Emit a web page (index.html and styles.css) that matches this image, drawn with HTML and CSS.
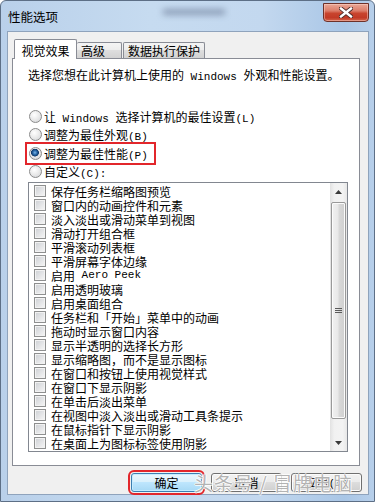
FILE: index.html
```html
<!DOCTYPE html>
<html lang="zh-CN">
<head>
<meta charset="utf-8">
<title>性能选项</title>
<link rel="stylesheet" href="styles.css">
</head>
<body>
<div class="window">
  <div class="titlebar">
    <span class="title">性能选项</span>
    <span class="glass-blur"></span>
    <button class="close" aria-label="关闭">
      <svg width="14" height="11" viewBox="0 0 14 11"><path d="M2 1.5 L12 9.5 M12 1.5 L2 9.5" stroke="#4a2a28" stroke-width="4.2" stroke-linecap="square"/><path d="M2 1.5 L12 9.5 M12 1.5 L2 9.5" stroke="#ffffff" stroke-width="2.4" stroke-linecap="square"/></svg>
    </button>
  </div>
  <div class="client">
    <div class="tabs">
      <div class="tab active">视觉效果</div>
      <div class="tab t2">高级</div>
      <div class="tab t3">数据执行保护</div>
    </div>
    <div class="panel">
      <p class="intro">选择您想在此计算机上使用的<span class="lat"> Windows </span>外观和性能设置。</p>
      <div class="radios">
        <div class="radio-row"><span class="radio"></span><span>让<span class="lat"> Windows </span>选择计算机的最佳设置<span class="lat">(L)</span></span></div>
        <div class="radio-row"><span class="radio"></span><span>调整为最佳外观<span class="lat">(B)</span></span></div>
        <div class="radio-row marked"><span class="radio on"></span><span>调整为最佳性能<span class="lat">(P)</span></span></div>
        <div class="radio-row"><span class="radio"></span><span>自定义<span class="lat">(C):</span></span></div>
      </div>
      <div class="listbox">
        <ul class="items">
          <li><span class="check"></span>保存任务栏缩略图预览</li>
          <li><span class="check"></span>窗口内的动画控件和元素</li>
          <li><span class="check"></span>淡入淡出或滑动菜单到视图</li>
          <li><span class="check"></span>滑动打开组合框</li>
          <li><span class="check"></span>平滑滚动列表框</li>
          <li><span class="check"></span>平滑屏幕字体边缘</li>
          <li><span class="check"></span>启用<span class="lat"> Aero Peek</span></li>
          <li><span class="check"></span>启用透明玻璃</li>
          <li><span class="check"></span>启用桌面组合</li>
          <li><span class="check"></span>任务栏和「开始」菜单中的动画</li>
          <li><span class="check"></span>拖动时显示窗口内容</li>
          <li><span class="check"></span>显示半透明的选择长方形</li>
          <li><span class="check"></span>显示缩略图，而不是显示图标</li>
          <li><span class="check"></span>在窗口和按钮上使用视觉样式</li>
          <li><span class="check"></span>在窗口下显示阴影</li>
          <li><span class="check"></span>在单击后淡出菜单</li>
          <li><span class="check"></span>在视图中淡入淡出或滑动工具条提示</li>
          <li><span class="check"></span>在鼠标指针下显示阴影</li>
          <li><span class="check"></span>在桌面上为图标标签使用阴影</li>
        </ul>
        <div class="scrollbar">
          <div class="sb-btn"><svg width="7" height="4" viewBox="0 0 7 4"><path d="M0 4 L3.5 0 L7 4 Z" fill="#3a3a3a"/></svg></div>
          <div class="track">
            <div class="thumb"><svg width="7" height="7" viewBox="0 0 7 7"><path d="M0 1.5 H7 M0 3.5 H7 M0 5.5 H7" stroke="#5a5a5a" stroke-width="1"/></svg></div>
          </div>
          <div class="sb-btn"><svg width="7" height="4" viewBox="0 0 7 4"><path d="M0 0 L3.5 4 L7 0 Z" fill="#3a3a3a"/></svg></div>
        </div>
      </div>
    </div>
    <div class="buttons">
      <button class="btn default">确定</button>
      <button class="btn">取消</button>
      <button class="btn">应用<span class="lat">(A)</span></button>
    </div>
  </div>
  <div class="watermark">头条号 / 冒牌电脑</div>
</div>
</body>
</html>
```
FILE: styles.css
```css
* { box-sizing: border-box; margin: 0; padding: 0; }
html, body { width: 375px; height: 502px; overflow: hidden; }
body {
  font-family: "Noto Sans CJK SC", "Noto Sans", sans-serif;
  font-size: 12px;
  color: #000;
  background: #fff;
}
.lat { font-family: "Liberation Mono", "DejaVu Sans Mono", monospace; font-size: 11px; white-space: pre; }

.window {
  position: relative;
  width: 375px;
  height: 502px;
  border: 1px solid #5d6f86;
  border-radius: 6px 6px 0 0;
  background: linear-gradient(90deg, #b9d0ea 0%, #c6dbf0 40%, #c3d8ef 70%, #a9c6e6 92%, #b7cfea 100%);
  display: flex;
  flex-direction: column;
}
.titlebar {
  position: relative;
  height: 30px;
  display: flex;
  align-items: flex-start;
  flex-shrink: 0;
}
.title { margin: 8px 0 0 7px; font-size: 12.5px; line-height: 16px; }
.glass-blur {
  position: absolute;
  left: 162px;
  top: 8px;
  width: 62px;
  height: 6px;
  background: rgba(70, 85, 115, 0.45);
  filter: blur(3px);
}
.close {
  margin: 2px 5px 0 auto;
  width: 46px;
  height: 19px;
  border: 1px solid #6e3129;
  border-radius: 0 0 4px 4px;
  background: linear-gradient(180deg, #e9a796 0%, #dc7d69 40%, #c8442e 55%, #c23a26 80%, #d2654c 100%);
  box-shadow: inset 0 0 0 1px rgba(255, 220, 210, 0.45);
  display: flex;
  align-items: center;
  justify-content: center;
}

.client {
  margin: 0 5px 0 6px;
  height: 464px;
  border: 1px solid #8fa3bc;
  background: #f0f0f0;
  padding-top: 7px;
  display: flex;
  flex-direction: column;
  flex-shrink: 0;
}

.tabs {
  position: relative;
  z-index: 1;
  display: flex;
  align-items: flex-end;
  height: 20px;
  margin-left: 6px;
  margin-bottom: -1px;
}
.tab {
  height: 16px;
  margin-bottom: 1px;
  border: 1px solid #898c95;
  border-bottom: none;
  border-radius: 2px 2px 0 0;
  background: linear-gradient(180deg, #f4f4f4 0%, #ececec 50%, #dedede 50%, #d2d2d2 100%);
  padding-left: 4px;
  line-height: 15px;
  white-space: nowrap;
}
.tab.active {
  width: 63px;
  height: 20px;
  margin-bottom: 0;
  background: #fff;
  padding: 1px 0 0 0;
  text-align: center;
  line-height: 19px;
}
.tab.t2 { width: 45px; border-left: none; }
.tab.t3 { width: 82px; margin-left: 1px; }

.panel {
  margin-left: 4px;
  width: 348px;
  height: 408px;
  border: 1px solid #898c95;
  background: #fff;
  padding: 8px 0 0 15px;
}
.intro { line-height: 16px; white-space: nowrap; }

.radios { margin-top: 22px; padding-left: 1px; }
.radio-row {
  height: 18.5px;
  display: flex;
  align-items: center;
  width: max-content;
  white-space: nowrap;
}
.radio-row.marked {
  margin-left: -2px;
  padding: 0 6px 0 2px;
  outline: 2px solid #e2262b;
}
.radio {
  width: 13px;
  height: 13px;
  margin-right: 2px;
  border-radius: 50%;
  border: 1px solid #8b8b8b;
  background: radial-gradient(circle at 40% 35%, #ffffff 0%, #ececec 45%, #cfd1d4 100%);
  flex-shrink: 0;
}
.radio.on {
  background:
    radial-gradient(circle at 45% 42%, #7cb6e6 0px, #2a6aaa 2px, #0f3868 3.6px, rgba(15, 56, 104, 0) 4.2px),
    radial-gradient(circle at 40% 35%, #ffffff 0%, #ececec 45%, #cfd1d4 100%);
}

.listbox {
  margin-top: 1px;
  width: 320px;
  height: 270px;
  border: 1px solid #828790;
  display: flex;
}
.items {
  flex: 1;
  list-style: none;
  padding: 1px 0 0 5px;
  overflow: hidden;
}
.items li {
  height: 14px;
  display: flex;
  align-items: center;
  white-space: nowrap;
}
.check {
  width: 12px;
  height: 12px;
  margin-right: 5px;
  border: 1px solid #8e8f8f;
  background: linear-gradient(135deg, #cdd0d4 0%, #e4e5e7 55%, #f6f6f6 100%);
  box-shadow: inset 0 0 0 1px #f2f2f2;
  flex-shrink: 0;
}

.scrollbar {
  width: 17px;
  display: flex;
  flex-direction: column;
  background: linear-gradient(90deg, #e2e2e2 0%, #f1f1f1 25%, #f3f3f3 75%, #e7e7e7 100%);
}
.sb-btn {
  height: 17px;
  display: flex;
  align-items: center;
  justify-content: center;
  flex-shrink: 0;
}
.track { flex: 1; padding: 2px 1px 0 1px; }
.thumb {
  height: 217px;
  border: 1px solid #999;
  border-radius: 2px;
  background: linear-gradient(90deg, #f1f1f1 0%, #e8e8e8 45%, #d8d8d8 55%, #cfcfcf 100%);
  box-shadow: inset 0 0 0 1px #fbfbfb;
  display: flex;
  align-items: center;
  justify-content: center;
}

.buttons {
  display: flex;
  justify-content: flex-end;
  gap: 9px;
  margin-top: 7px;
  padding-right: 6px;
}
.btn {
  width: 71px;
  height: 19px;
  border: 1px solid #707070;
  border-radius: 3px;
  background: linear-gradient(180deg, #f2f2f2 0%, #ebebeb 50%, #dddddd 50%, #cfcfcf 100%);
  box-shadow: inset 0 0 0 1px #fbfbfb;
  font-family: "Noto Sans CJK SC", "Noto Sans", sans-serif;
  font-size: 12px;
  line-height: 16px;
  color: #000;
}
.btn.default {
  border-color: #3c7fb1;
  background: linear-gradient(180deg, #eaf6fd 0%, #d9f0fc 50%, #bee6fd 50%, #a7d9f5 100%);
  box-shadow: inset 0 0 0 1px #c6ecff;
  outline: 2px solid #e2262b;
  outline-offset: 1px;
}

.watermark {
  position: absolute;
  left: 193px;
  top: 471px;
  font-size: 19px;
  line-height: 22px;
  letter-spacing: 1px;
  white-space: pre;
  color: rgba(105, 105, 105, 0.5);
  text-shadow: 1px 0 0 rgba(255,255,255,0.8), -1px 0 0 rgba(255,255,255,0.8), 0 1px 0 rgba(255,255,255,0.8), 0 -1px 0 rgba(255,255,255,0.8);
  pointer-events: none;
}
```
